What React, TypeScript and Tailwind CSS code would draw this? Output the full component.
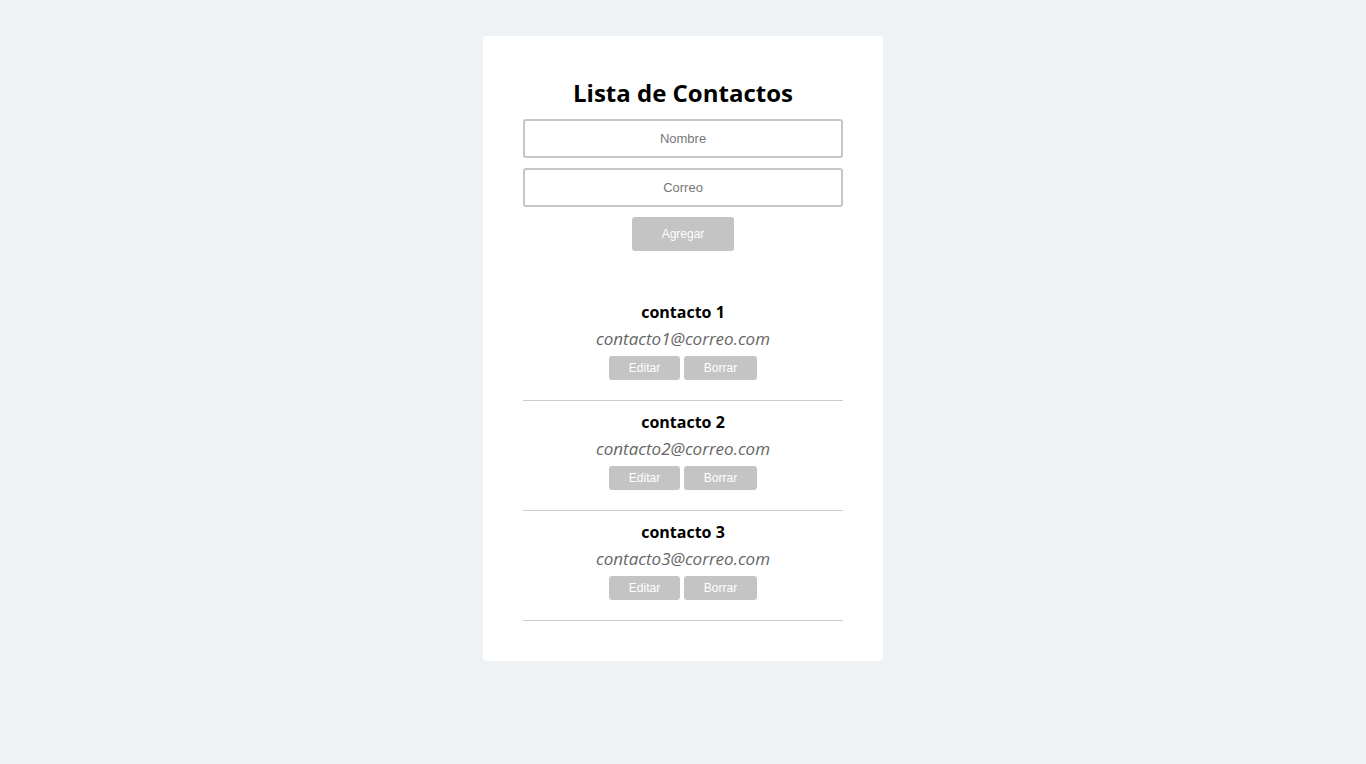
import React, { useState } from "react";

type Contact = { id: number; name: string; email: string };

const initial: Contact[] = [
  { id: 1, name: "contacto 1", email: "contacto1@correo.com" },
  { id: 2, name: "contacto 2", email: "contacto2@correo.com" },
  { id: 3, name: "contacto 3", email: "contacto3@correo.com" },
];

export default function App() {
  const [contacts, setContacts] = useState<Contact[]>(initial);
  const [name, setName] = useState("");
  const [email, setEmail] = useState("");

  const add = () => {
    if (!name || !email) return;
    setContacts([...contacts, { id: Date.now(), name, email }]);
    setName("");
    setEmail("");
  };

  return (
    <div className="min-h-screen bg-[#eef2f5] flex justify-center pt-[36px] font-['Open_Sans',sans-serif]">
      <div className="w-[400px] h-fit bg-white rounded-[4px] px-[40px] pt-[40px] pb-[40px]">
        <h1 className="text-center text-[24px] leading-[34px] font-bold text-black">
          Lista de Contactos
        </h1>
        <input
          value={name}
          onChange={(e) => setName(e.target.value)}
          placeholder="Nombre"
          className="mt-[9px] block w-full h-[39px] border-2 border-[#c6c6c6] rounded-[3px] text-center text-[13px] font-['Liberation_Sans',Arial,sans-serif] placeholder:text-[#777] outline-none"
        />
        <input
          value={email}
          onChange={(e) => setEmail(e.target.value)}
          placeholder="Correo"
          className="mt-[10px] block w-full h-[39px] border-2 border-[#c6c6c6] rounded-[3px] text-center text-[13px] font-['Liberation_Sans',Arial,sans-serif] placeholder:text-[#777] outline-none"
        />
        <div className="flex justify-center mt-[10px]">
          <button
            onClick={add}
            className="w-[102px] h-[34px] bg-[#c4c4c4] text-white text-[12px] rounded-[3px] font-['Liberation_Sans',Arial,sans-serif]"
          >
            Agregar
          </button>
        </div>
        <ul className="mt-[40px]">
          {contacts.map((c) => (
            <li
              key={c.id}
              className="border-b border-[#cccccc] pt-[9px] pb-[20px] text-center"
            >
              <div className="text-[16px] leading-[24px] font-bold text-black">{c.name}</div>
              <div className="mt-[1px] text-[17px] leading-[28px] italic text-[#666]">{c.email}</div>
              <div className="mt-[3px] flex justify-center gap-[4px]">
                <button className="w-[71px] h-[24px] bg-[#c4c4c4] text-white text-[12px] rounded-[3px] font-['Liberation_Sans',Arial,sans-serif]">
                  Editar
                </button>
                <button
                  onClick={() => setContacts(contacts.filter((x) => x.id !== c.id))}
                  className="w-[73px] h-[24px] bg-[#c4c4c4] text-white text-[12px] rounded-[3px] font-['Liberation_Sans',Arial,sans-serif]"
                >
                  Borrar
                </button>
              </div>
            </li>
          ))}
        </ul>
      </div>
    </div>
  );
}
